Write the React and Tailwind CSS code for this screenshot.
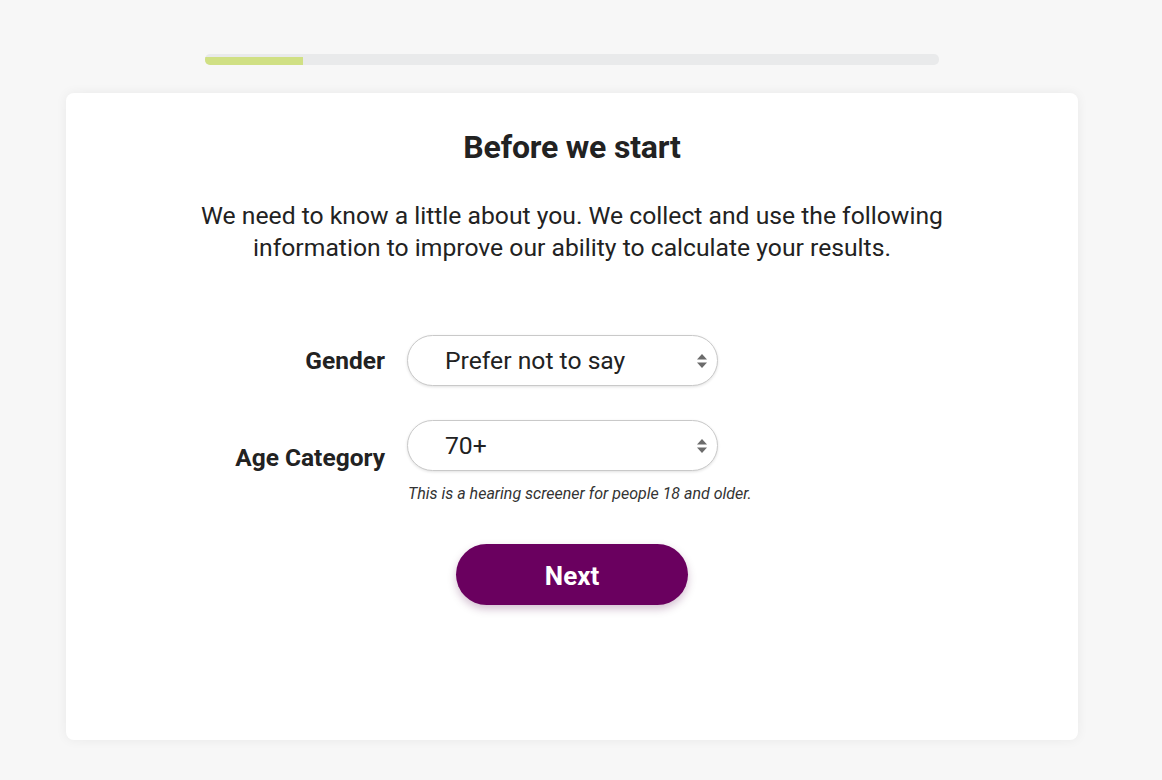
import { useState } from 'react';

/**
 * Flechas del select (arriba / abajo)
 */
function SelectArrows() {
  return (
    <svg width="12" height="18" viewBox="0 0 12 18" className="pointer-events-none absolute right-[10px] top-1/2 -translate-y-1/2">
      <path d="M6 2 L11 7.5 L1 7.5 Z" fill="#6b6b6b" />
      <path d="M6 16 L11 10.5 L1 10.5 Z" fill="#6b6b6b" />
    </svg>
  );
}

function PillSelect({ value, onChange, options }) {
  return (
    <div className="relative w-[311px]">
      <select
        value={value}
        onChange={(e) => onChange(e.target.value)}
        className="h-[51px] w-full appearance-none rounded-full border border-[#c9c9c9] bg-white pl-[37px] pr-8 text-[24.7px] text-[#222] shadow-[0_1px_3px_rgba(0,0,0,0.12)] outline-none"
      >
        {options.map((opt) => (
          <option key={opt} value={opt}>{opt}</option>
        ))}
      </select>
      <SelectArrows />
    </div>
  );
}

export default function App() {
  const [gender, setGender] = useState('Prefer not to say');
  const [age, setAge] = useState('70+');

  return (
    <div className="min-h-screen w-full bg-[#f7f7f7] font-['Roboto',sans-serif] text-[#222]">
      {/* Ancho del contenido sin la barra de scroll */}
      <div className="w-[1144px] pt-[54px]">
        {/* Progress bar */}
        <div className="mx-auto flex h-[11px] w-[734px] items-end overflow-hidden rounded-[5px] bg-[#e9eaeb]">
          <div className="h-[8px] w-[98px] bg-[#d0e084]" />
        </div>

        {/* Card */}
        <div className="mx-auto mt-[28px] h-[647px] w-[1012px] rounded-[8px] bg-white pt-[35px] shadow-[0_0_12px_rgba(0,0,0,0.06)]">
          <h1 className="text-center text-[32px] font-bold leading-[38px] tracking-[-0.2px]">Before we start</h1>
          <p className="mx-auto mt-[34px] w-[800px] text-center text-[24.7px] leading-[32px]">
            We need to know a little about you. We collect and use the following information to improve our ability to calculate your results.
          </p>

          {/* Form */}
          <div className="mt-[71px] grid grid-cols-[319px_auto] items-center gap-x-[22px] gap-y-[34px]">
            <label className="text-right text-[24.5px] font-bold leading-[28px]">Gender</label>
            <PillSelect
              value={gender}
              onChange={setGender}
              options={['Prefer not to say', 'Female', 'Male', 'Other']}
            />

            <label className="pb-[8px] text-right text-[24.5px] font-bold leading-[28px]">Age Category</label>
            <div>
              <PillSelect
                value={age}
                onChange={setAge}
                options={['18-29', '30-39', '40-49', '50-59', '60-69', '70+']}
              />
              <p className="mt-[13px] pl-[1px] text-[16px] italic leading-[19px] text-[#333]">
                This is a hearing screener for people 18 and older.
              </p>
            </div>
          </div>

          <div className="mt-[41px] flex justify-center">
            <button className="h-[61px] w-[232px] rounded-full bg-[#6a005f] pt-[3px] text-[26px] font-bold text-white shadow-[0_4px_8px_rgba(80,0,70,0.25)]">
              Next
            </button>
          </div>
        </div>
      </div>
    </div>
  );
}
